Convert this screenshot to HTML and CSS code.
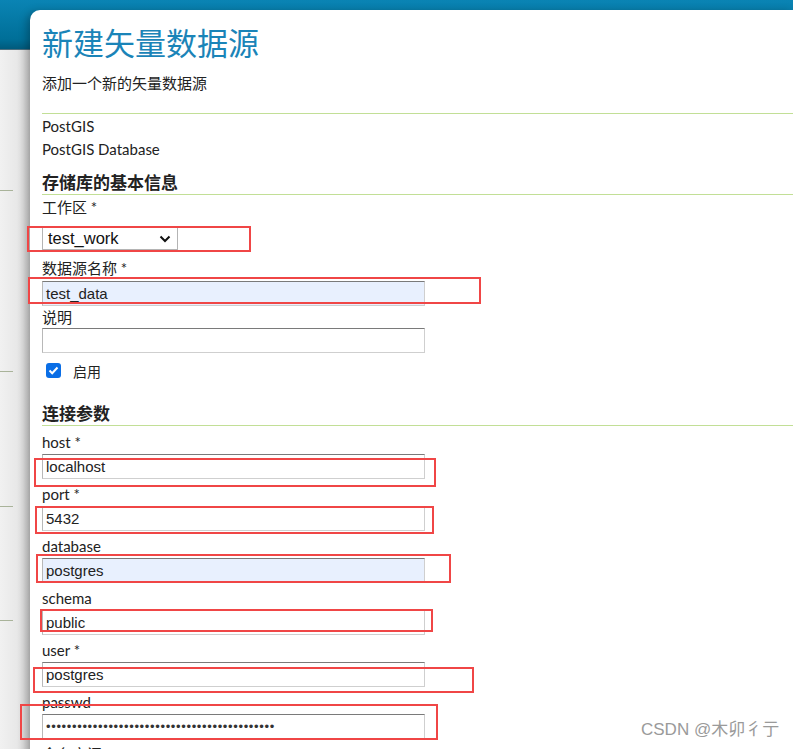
FILE: index.html
```html
<!DOCTYPE html>
<html lang="zh-CN">
<head>
<meta charset="utf-8">
<title>新建矢量数据源</title>
<link rel="stylesheet" href="styles.css">
</head>
<body>
<div class="header"></div>
<div class="layout">
  <aside class="sidebar">
    <div class="side-rule r1"></div>
    <div class="side-rule r2"></div>
    <div class="side-rule r3"></div>
    <div class="side-rule r4"></div>
  </aside>
  <main class="panel">
    <h1 class="title">新建矢量数据源</h1>
    <p class="subtitle">添加一个新的矢量数据源</p>
    <div class="store-type">
      <div class="line">PostGIS</div>
      <div class="line">PostGIS Database</div>
    </div>
    <h2 class="section">存储库的基本信息</h2>
    <div class="field ws">
      <label class="label">工作区 *</label>
      <div class="select"><span>test_work</span>
        <svg class="chev" width="12" height="8" viewBox="0 0 12 8"><path d="M1.5 1.5 L6 6 L10.5 1.5" fill="none" stroke="#111" stroke-width="2"/></svg>
      </div>
    </div>
    <div class="field name">
      <label class="label">数据源名称 *</label>
      <div class="input auto">test_data</div>
    </div>
    <div class="field desc">
      <label class="label">说明</label>
      <div class="input"></div>
    </div>
    <div class="check-row">
      <span class="checkbox"><svg width="15" height="15" viewBox="0 0 15 15"><path d="M3.5 7.5 L6.2 10.2 L11.5 4.5" fill="none" stroke="#fff" stroke-width="2"/></svg></span>
      <span class="check-label">启用</span>
    </div>
    <h2 class="section sec2">连接参数</h2>
    <div class="params">
      <div class="field f2">
        <label class="label">host *</label>
        <div class="input">localhost</div>
      </div>
      <div class="field f2">
        <label class="label">port *</label>
        <div class="input">5432</div>
      </div>
      <div class="field f2">
        <label class="label">database</label>
        <div class="input auto">postgres</div>
      </div>
      <div class="field f2">
        <label class="label">schema</label>
        <div class="input">public</div>
      </div>
      <div class="field f2">
        <label class="label">user *</label>
        <div class="input">postgres</div>
      </div>
      <div class="field f2">
        <label class="label">passwd</label>
        <div class="input pw">••••••••••••••••••••••••••••••••••••••••••••</div>
      </div>
      <div class="field f2">
        <label class="label">命名空间 URI *</label>
      </div>
    </div>
  </main>
</div>
<div class="mark m1"></div>
<div class="mark m2"></div>
<div class="mark m3"></div>
<div class="mark m4"></div>
<div class="mark m5"></div>
<div class="mark m6"></div>
<div class="mark m7"></div>
<div class="mark m8"></div>
<div class="watermark">CSDN @木卯彳亍</div>
</body>
</html>
```
FILE: styles.css
```css
html, body {
  margin: 0;
  padding: 0;
}
body {
  width: 793px;
  height: 749px;
  overflow: hidden;
  position: relative;
  background: #f2f2f2;
  font-family: "Lato", "Noto Sans CJK SC", sans-serif;
  font-size: 15px;
  color: #222;
}
.header {
  height: 49px;
  background: linear-gradient(#0a84b4, #006f98 80%, #005a7c);
  border-bottom: 1px solid #4d6f7f;
}
.layout {
  display: flex;
  margin-top: -40px;
}
.sidebar {
  width: 30px;
  flex: none;
  padding-top: 40px;
  background-image: linear-gradient(to right, #f1f1f1 0%, #e8e8e8 55%, #d2d2d2 100%);
  background-position: 0 40px;
  background-repeat: no-repeat;
  display: flex;
  flex-direction: column;
}
.side-rule {
  width: 13px;
  height: 1px;
  background: #a9b39a;
}
.r1 { margin-top: 140px; }
.r2 { margin-top: 180px; }
.r3 { margin-top: 134px; }
.r4 { margin-top: 113px; }
.panel {
  flex: 1;
  background: #fff;
  border-top-left-radius: 10px;
  box-shadow: -3px 2px 8px rgba(0,0,0,0.28);
  padding: 12px 0 0 12px;
  height: 760px;
}
.title {
  margin: 0;
  font-family: "Noto Sans CJK SC", sans-serif;
  font-weight: 400;
  font-size: 31px;
  line-height: 40px;
  color: #1a84b8;
}
.subtitle {
  margin: 11px 0 0;
  font-family: "Noto Sans CJK SC", sans-serif;
  font-size: 15px;
  line-height: 20px;
  color: #222;
}
.store-type {
  margin-top: 20px;
  border-top: 1px solid #c2df96;
  padding-top: 1px;
}
.line {
  line-height: 23px;
  font-size: 15px;
}
.section {
  margin: 9px 0 0;
  font-family: "Noto Sans CJK SC", sans-serif;
  font-weight: 700;
  font-size: 17px;
  line-height: 24px;
  color: #222;
  border-bottom: 1px solid #c2df96;
}
.field {
  display: flex;
  flex-direction: column;
  align-items: flex-start;
}
.label {
  line-height: 22px;
  font-size: 15px;
  color: #222;
}
.ws { margin-top: 1px; }
.name { margin-top: 7px; }
.name .input { margin-top: 2px; }
.desc .input { margin-top: 0; }
.select {
  margin-top: 9px;
  display: flex;
  align-items: center;
  justify-content: space-between;
  padding: 0 6px 0 5px;
  box-sizing: border-box;
  width: 136px;
  height: 23px;
  border: 1px solid #b4b4b4;
  font-family: "Liberation Sans", Arial, sans-serif;
  font-size: 16.5px;
  color: #111;
}
.chev { display: block; }
.input {
  width: 383px;
  height: 25px;
  box-sizing: border-box;
  border: 1px solid #cfcfcf;
  border-top-color: #7a7a7a;
  border-left-color: #b8b8b8;
  padding: 0 3px;
  font-family: "Liberation Sans", Arial, sans-serif;
  font-size: 15px;
  line-height: 23px;
  color: #222;
  background: #fff;
}
.input.auto { background: #e8f0fe; }
.check-row {
  display: flex;
  align-items: center;
  margin-top: 10px;
  padding-left: 4px;
  height: 15px;
}
.checkbox {
  width: 15px;
  height: 15px;
  border-radius: 3px;
  background: #0a6ee6;
  display: block;
}
.checkbox svg { display: block; }
.check-label {
  margin-left: 12px;
  font-family: "Noto Sans CJK SC", sans-serif;
  font-size: 14px;
}
.sec2 {
  margin-top: 23px;
}
.params {
  padding-top: 5px;
}
.f2 { margin-bottom: 4px; }
.f2 .input { margin-top: 1px; }
.pw {
  font-size: 13px;
  letter-spacing: 0.65px;
  color: #333;
}
.mark {
  position: absolute;
  border: 2px solid #f04646;
  box-sizing: border-box;
}
.m1 { left: 27px; top: 226px; width: 224px; height: 26px; }
.m2 { left: 28px; top: 277px; width: 453px; height: 27px; }
.m3 { left: 34px; top: 458px; width: 402px; height: 29px; }
.m4 { left: 35px; top: 506px; width: 399px; height: 28px; }
.m5 { left: 36px; top: 554px; width: 415px; height: 29px; }
.m6 { left: 40px; top: 609px; width: 393px; height: 23px; }
.m7 { left: 33px; top: 667px; width: 441px; height: 26px; }
.m8 { left: 20px; top: 704px; width: 418px; height: 36px; }
.watermark {
  position: absolute;
  left: 641px;
  top: 718px;
  font-family: "Liberation Sans", "Noto Sans CJK SC", sans-serif;
  font-size: 17px;
  line-height: 24px;
  color: #9a9a9a;
}
```
